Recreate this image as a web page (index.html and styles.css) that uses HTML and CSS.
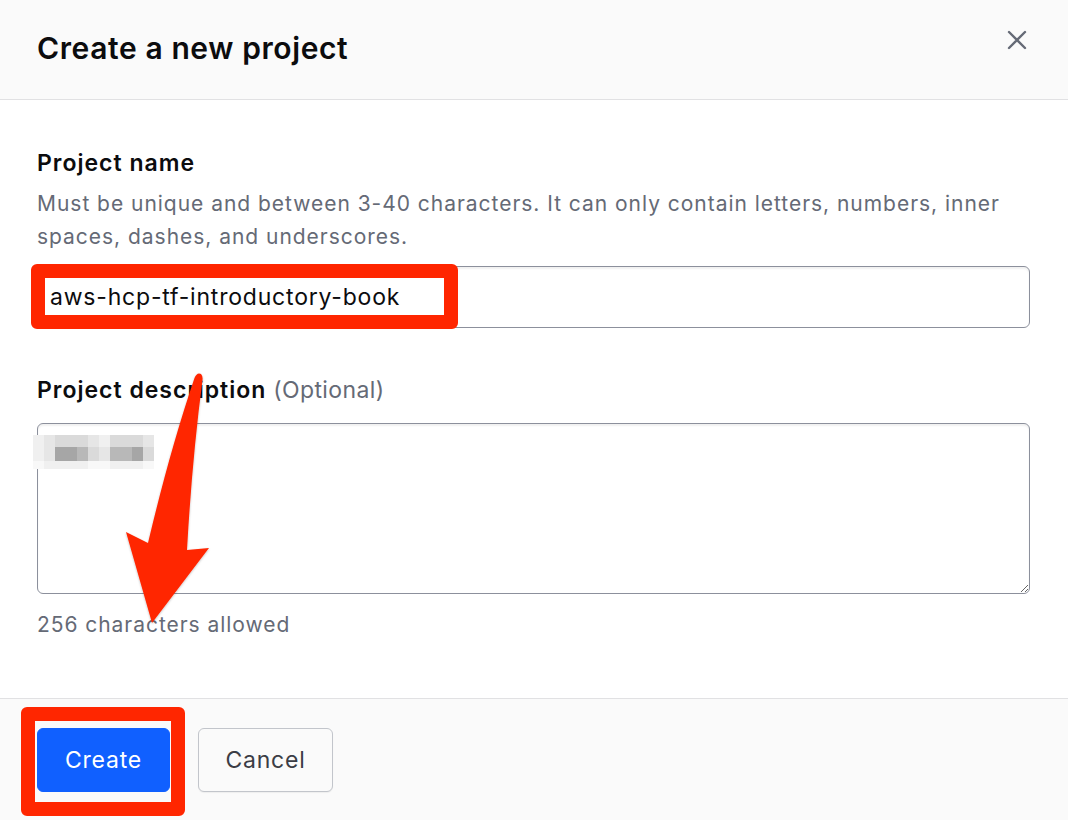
FILE: index.html
```html
<!DOCTYPE html>
<html lang="en">
<head>
<meta charset="utf-8">
<title>Create a new project</title>
<link rel="stylesheet" href="styles.css">
</head>
<body>
<div class="modal">
  <header class="modal-header">
    <h1 class="modal-title">Create a new project</h1>
    <button class="close-btn" type="button" aria-label="Close">
      <svg width="22" height="22" viewBox="0 0 22 22"><path d="M3 3 L19 19 M19 3 L3 19" stroke="#656a76" stroke-width="2.4" stroke-linecap="round" fill="none"/></svg>
    </button>
  </header>
  <main class="modal-body">
    <div class="field">
      <label class="field-label" for="pname">Project name</label>
      <p class="field-help">Must be unique and between 3-40 characters. It can only contain letters, numbers, inner spaces, dashes, and underscores.</p>
      <input id="pname" class="text-input" type="text" value="aws-hcp-tf-introductory-book">
    </div>
    <div class="field field-desc">
      <label class="field-label" for="pdesc">Project description <span class="optional">(Optional)</span></label>
      <div class="textarea-wrap">
        <textarea id="pdesc" class="text-area"></textarea>
        <div class="mosaic" aria-hidden="true">
          <span class="c1"></span><span class="c2"></span><span class="c3"></span><span class="c3"></span><span class="c3"></span><span class="c2"></span><span class="c1"></span><span class="c3"></span><span class="c3"></span><span class="c3"></span><span class="c2"></span>
          <span class="c1"></span><span class="c2"></span><span class="c5"></span><span class="c5"></span><span class="c4"></span><span class="c3"></span><span class="c2"></span><span class="c4"></span><span class="c4"></span><span class="c5"></span><span class="c3"></span>
          <span class="c0"></span><span class="c1"></span><span class="c1"></span><span class="c1"></span><span class="c1"></span><span class="c0"></span><span class="c0"></span><span class="c1"></span><span class="c1"></span><span class="c1"></span><span class="c0"></span>
        </div>
      </div>
      <p class="field-count">256 characters allowed</p>
    </div>
  </main>
  <footer class="modal-footer">
    <button class="btn btn-primary" type="button">Create</button>
    <button class="btn btn-secondary" type="button">Cancel</button>
  </footer>

  <div class="mark mark-input"></div>
  <div class="mark mark-create"></div>
  <svg class="arrow" width="1068" height="820" viewBox="0 0 1068 820" aria-hidden="true">
    <defs>
      <filter id="sh" x="-20%" y="-20%" width="140%" height="140%">
        <feDropShadow dx="0" dy="1" stdDeviation="1.2" flood-color="#000" flood-opacity="0.25"/>
      </filter>
    </defs>
    <path filter="url(#sh)" fill="#ff2600" d="M194.5 378 Q197 372 201 374 Q203 376 202.5 380 Q192 460 187 550 L209 548 L152 623 L126 532 L148 543 Q170 450 194.5 378 Z"/>
  </svg>
</div>
</body>
</html>
```

FILE: styles.css
```css
* { box-sizing: border-box; }

html, body {
  margin: 0;
  padding: 0;
  width: 1068px;
  height: 820px;
  overflow: hidden;
  background: #ffffff;
}

body {
  font-family: Inter, "Noto Sans", "Liberation Sans", sans-serif;
  color: #0c0c0e;
}

.modal {
  position: relative;
  width: 1068px;
  height: 820px;
  display: flex;
  flex-direction: column;
  background: #ffffff;
}

.modal-header {
  height: 100px;
  flex: 0 0 100px;
  background: #fafafa;
  border-bottom: 1px solid #e1e1e3;
  display: flex;
  align-items: center;
  justify-content: space-between;
  padding: 0 40px 4px 37px;
}

.modal-title {
  margin: 0;
  font-size: 30px;
  font-weight: 600;
  letter-spacing: 0.6px;
  color: #0c0c0e;
}

.close-btn {
  border: 0;
  background: transparent;
  padding: 0;
  width: 22px;
  height: 22px;
  margin-bottom: 16px;
  display: flex;
  align-items: center;
  justify-content: center;
}

.modal-body {
  flex: 1 1 auto;
  padding: 47px 38px 0 37px;
}

.field {
  display: flex;
  flex-direction: column;
}

.field-label {
  font-size: 23px;
  font-weight: 600;
  line-height: 32px;
  letter-spacing: 1px;
  color: #0c0c0e;
}

.optional {
  font-weight: 400;
  letter-spacing: 0.4px;
  color: #656a76;
}

.field-help {
  margin: 8px 0 0;
  font-size: 21px;
  line-height: 33px;
  letter-spacing: 0.97px;
  color: #656a76;
}

.text-input {
  margin-top: 13px;
  width: 993px;
  height: 62px;
  border: 1px solid #8c909c;
  border-radius: 6px;
  box-shadow: inset 0 2px 2px rgba(0, 0, 0, 0.06);
  padding: 0 12px;
  font-family: inherit;
  font-size: 23px;
  letter-spacing: 0.8px;
  color: #0c0c0e;
  background: #fff;
  outline: none;
}

.field-desc {
  margin-top: 46px;
}

.textarea-wrap {
  position: relative;
  margin-top: 17px;
  width: 993px;
  height: 171px;
}

.text-area {
  display: block;
  width: 993px;
  height: 171px;
  border: 1px solid #8c909c;
  border-radius: 6px;
  box-shadow: inset 0 2px 2px rgba(0, 0, 0, 0.06);
  background: #fff;
  resize: vertical;
  font-family: inherit;
  font-size: 22px;
  outline: none;
}

.mosaic {
  position: absolute;
  left: -4px;
  top: 12px;
  display: grid;
  grid-template-columns: repeat(11, 11px);
  grid-template-rows: 12px 14px 8px;
}

.mosaic .c0 { background: #f8f8f8; }
.mosaic .c1 { background: #f0f0f0; }
.mosaic .c2 { background: #e6e6e6; }
.mosaic .c3 { background: #dadada; }
.mosaic .c4 { background: #b8b8b8; }
.mosaic .c5 { background: #a6a6a6; }

.field-count {
  margin: 15px 0 0;
  font-size: 21px;
  line-height: 32px;
  letter-spacing: 0.95px;
  color: #656a76;
}

.modal-footer {
  flex: 0 0 122px;
  height: 122px;
  background: #fafafa;
  border-top: 1px solid #e1e1e3;
  display: flex;
  align-items: flex-start;
  gap: 28px;
  padding: 29px 37px 0;
}

.btn {
  height: 64px;
  border-radius: 6px;
  font-family: inherit;
  font-size: 23px;
  font-weight: 400;
  letter-spacing: 0.8px;
  padding: 0;
}

.btn-primary {
  width: 133px;
  background: #1060ff;
  border: 1px solid #1060ff;
  color: #ffffff;
}

.btn-secondary {
  width: 135px;
  background: #fafafa;
  border: 1px solid #c2c5cb;
  color: #3b3d45;
  box-shadow: 0 1px 1px rgba(0, 0, 0, 0.05);
}

/* annotations drawn over the screenshot */
.mark {
  position: absolute;
  border: 14px solid #ff2600;
  border-radius: 6px;
  pointer-events: none;
}

.mark-input {
  left: 31px;
  top: 264px;
  width: 427px;
  height: 65px;
}

.mark-create {
  left: 21px;
  top: 707px;
  width: 164px;
  height: 109px;
}

.arrow {
  position: absolute;
  left: 0;
  top: 0;
  pointer-events: none;
}
```
